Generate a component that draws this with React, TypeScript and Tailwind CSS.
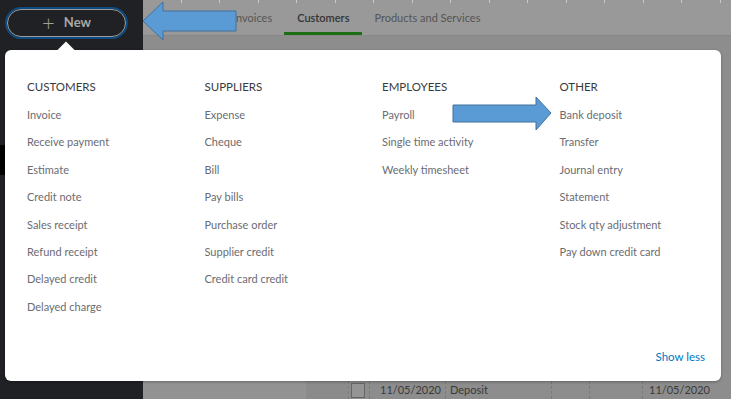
const columns = [
  {
    title: 'CUSTOMERS',
    items: ['Invoice', 'Receive payment', 'Estimate', 'Credit note', 'Sales receipt', 'Refund receipt', 'Delayed credit', 'Delayed charge'],
  },
  {
    title: 'SUPPLIERS',
    items: ['Expense', 'Cheque', 'Bill', 'Pay bills', 'Purchase order', 'Supplier credit', 'Credit card credit'],
  },
  {
    title: 'EMPLOYEES',
    items: ['Payroll', 'Single time activity', 'Weekly timesheet'],
  },
  {
    title: 'OTHER',
    items: ['Bank deposit', 'Transfer', 'Journal entry', 'Statement', 'Stock qty adjustment', 'Pay down credit card'],
  },
]

const ticks = Array.from({ length: 19 }, (_, i) => i)

function BlueArrow({ dir, className }: { dir: 'left' | 'right'; className: string }) {
  // flat blue block arrow, as drawn on top of the screenshot
  const pts = dir === 'left' ? '1,20 21,1 21,10 94,10 94,30 21,30 21,39' : '1,9 84,9 84,1 99,17 84,34 84,26 1,26'
  const vb = dir === 'left' ? '0 0 96 41' : '0 0 100 35'
  return (
    <svg viewBox={vb} className={className}>
      <polygon points={pts} fill="#5b9bd5" stroke="#41719c" strokeWidth="1" />
    </svg>
  )
}

export default function App() {
  return (
    <div className="relative flex h-[399px] w-[731px] overflow-hidden font-['Lato',sans-serif]">
      <aside className="flex w-[143px] shrink-0 flex-col bg-[#202124]">
        <div className="px-[5px] pt-[7px]">
          <button className="flex h-[32px] w-[123px] items-center justify-center rounded-full border-2 border-[#0c4a80] p-0">
            <span className="flex h-full w-full items-center justify-center gap-[9px] rounded-full border-[1.5px] border-[#9c9c9c]">
              <span className="text-[22px] font-light leading-none text-[#a0a0a0]">+</span>
              <span className="text-[13px] font-bold text-[#a8a8a8]">New</span>
            </span>
          </button>
        </div>
        <div className="mt-[106px] h-[30px] w-[6px] bg-black" />
      </aside>

      <main className="flex flex-1 flex-col bg-[#8d8d8d]">
        <div className="relative h-[36px] border-b border-[#888] bg-[#999999]">
          <div className="absolute top-0 left-0 flex">
            {ticks.map((i) => (
              <span key={i} className="ml-[37.5px] h-[3px] w-px bg-[#c8c8c8]" />
            ))}
          </div>
          <div className="flex h-full items-end gap-[12px] pl-[90px] text-[11px]">
            <span className="pb-[9px] text-[#555]">Invoices</span>
            <span className="border-b-[3px] border-[#1d6d12] px-[13px] pb-[6px] font-semibold text-[#333]">Customers</span>
            <span className="pb-[9px] text-[#555]">Products and Services</span>
          </div>
        </div>
        <div className="flex-1" />
        <div className="flex h-[18px] items-center text-[11px] text-[#3a3a3a]">
          <div className="h-full w-[163px] bg-[#939393]" />
          <div className="h-full w-[42px] bg-[#8b8b8b]" />
          <div className="flex h-full items-center border-l border-dashed border-[#7a7a7a] pl-[2px]">
            <span className="h-[15px] w-[14px] border border-[#666] bg-[#949494]" />
          </div>
          <span className="ml-[4px] flex h-full items-center border-l border-dashed border-[#7a7a7a] pl-[10px]">11/05/2020</span>
          <span className="ml-[4px] flex h-full w-[106px] items-center border-l border-dashed border-[#7a7a7a] pl-[4px]">Deposit</span>
          <span className="flex h-full w-[38px] border-l border-dashed border-[#7a7a7a]" />
          <span className="flex h-full w-[53px] border-l border-dashed border-[#7a7a7a]" />
          <span className="flex h-full items-center border-l border-dashed border-[#7a7a7a] pl-[6px]">11/05/2020</span>
        </div>
      </main>

      {/* dropdown panel */}
      <div className="absolute top-[50px] left-[5px] flex h-[331px] w-[716px] flex-col rounded-[6px] bg-white pt-[29px] pr-[16px] pb-[16px] pl-[22px] shadow-[0_1px_3px_rgba(0,0,0,0.3)]">
        <span className="absolute -top-[6px] left-[55px] h-[12px] w-[12px] rotate-45 bg-white" />
        <div className="flex">
          {columns.map((col) => (
            <div key={col.title} className="w-[177.5px] shrink-0">
              <div className="h-[15px] text-[11.5px] leading-[15px] text-[#393a3d]">{col.title}</div>
              <ul className="mt-[13px] flex flex-col">
                {col.items.map((item) => (
                  <li key={item} className="h-[27.4px] text-[11px] leading-[15px] text-[#6b6c72]">
                    {item}
                  </li>
                ))}
              </ul>
            </div>
          ))}
        </div>
        <div className="mt-auto text-right text-[11.5px] text-[#0077c5]">Show less</div>
      </div>

      <BlueArrow dir="left" className="absolute top-[1px] left-[142px] h-[41px] w-[96px]" />
      <BlueArrow dir="right" className="absolute top-[96px] left-[452px] h-[35px] w-[100px]" />
    </div>
  )
}
